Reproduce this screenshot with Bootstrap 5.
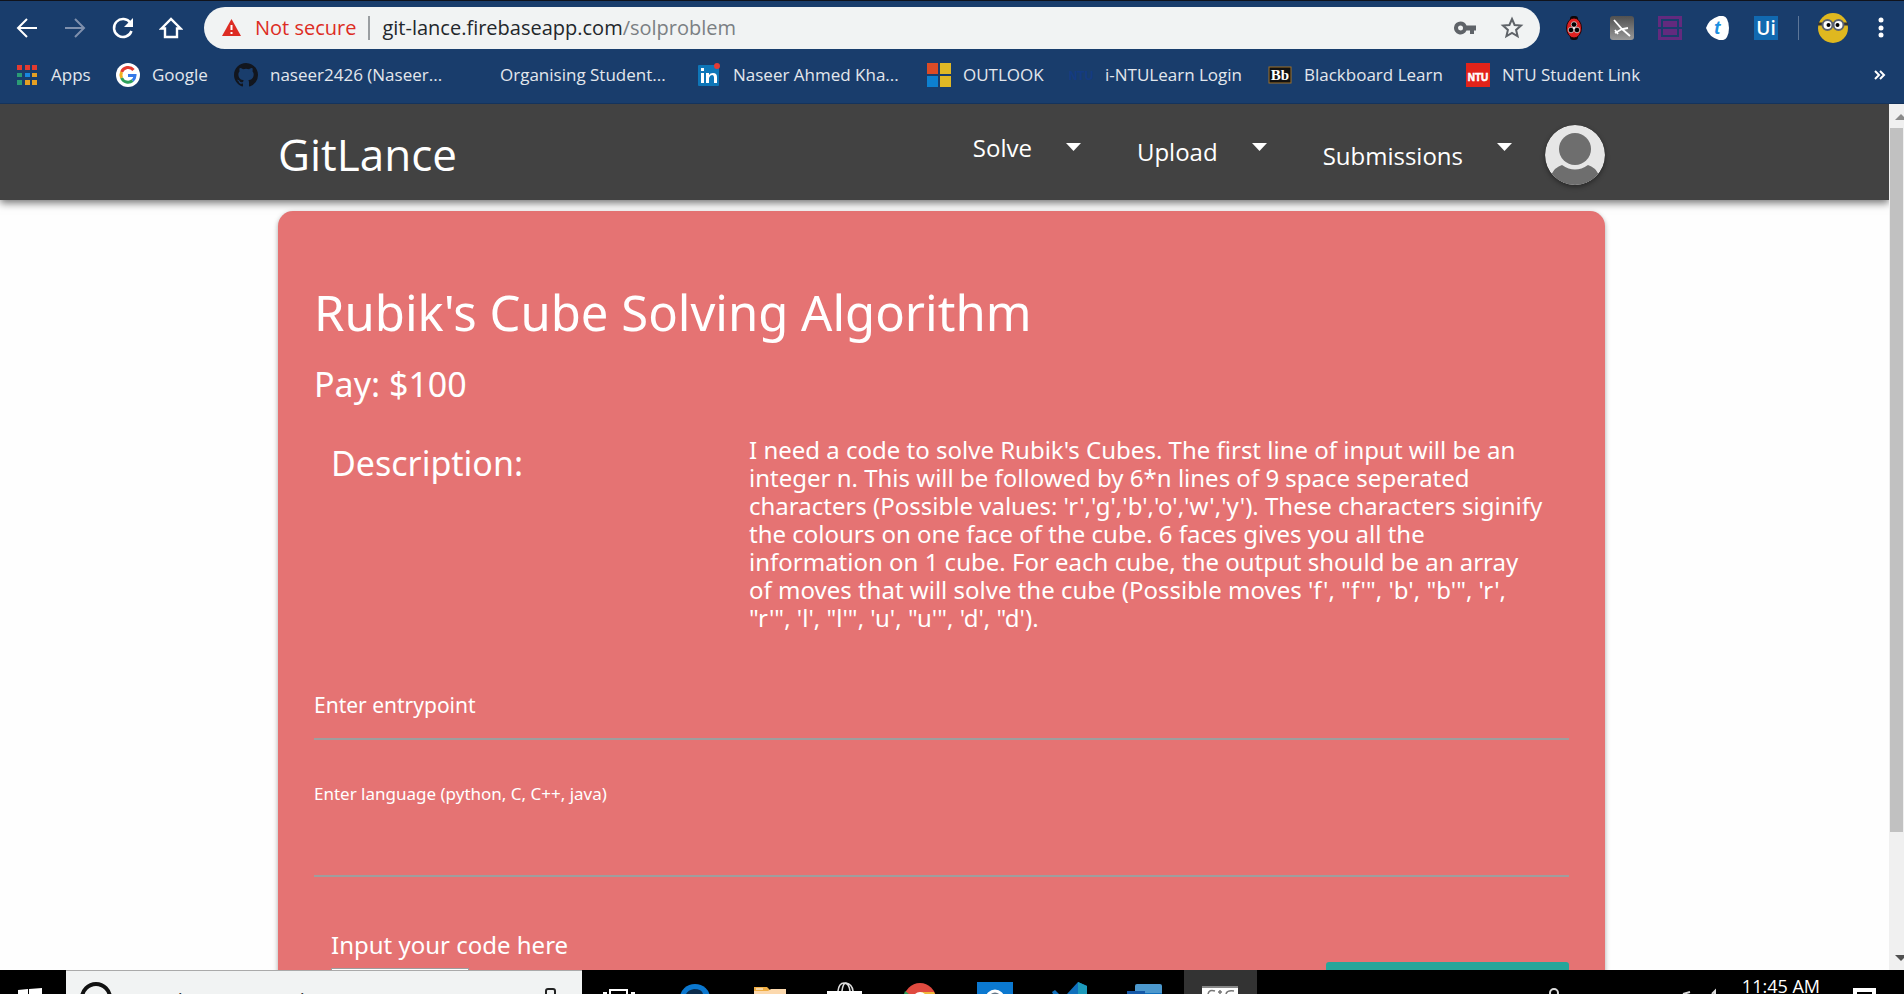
<!DOCTYPE html>
<html lang="en">
<head>
<meta charset="utf-8">
<meta name="viewport" content="width=device-width, initial-scale=1">
<title>GitLance</title>
<link href="https://cdn.jsdelivr.net/npm/bootstrap@5.3.0/dist/css/bootstrap.min.css" rel="stylesheet">
<style>
  body { font-family: "Open Sans", "Noto Sans", sans-serif; background: #fefefe; height: 100vh; overflow: hidden; }
  a { text-decoration: none; }
  button { font-family: inherit; }
  svg { display: block; flex: none; }

  /* browser chrome */
  .chrome-bar { background: #193d6c; border-top: 1px solid #10131c; border-bottom: 1px solid #14335c; height: 104px; padding-top: 6px; }
  .tool-row { height: 42px; padding-left: 15px; padding-right: 11px; }
  .tool-btn { width: 24px; height: 24px; padding: 0; border: 0; background: none; margin-right: 24px; }
  .omnibox { background: #f1f3f3; border-radius: 21px; height: 42px; padding: 0 16px 0 18px; margin-left: -3px; font-size: 20px; line-height: 28px; }
  .omnibox .warn { color: #dd2c23; margin-left: 14px; }
  .omnibox .rule { width: 2px; height: 24px; background: #9a9ea1; margin: 0 12px; }
  .url-host { color: #23272b; }
  .url-path { color: #7b7f83; }
  .ext-group { margin: 0 20px 0 22px; }
  .ext-btn { width: 24px; height: 24px; padding: 0; border: 0; background: none; }
  .profile-btn { padding: 0; border: 0; background: none; margin: 0 20px 0 17px; }
  .marks-row { display: grid; grid-template-columns: 101px 118px 230px 233px 230px 142px 199px 198px 1fr auto; padding: 0 18px 0 15px; margin-top: 12px; height: 28px; align-items: center; }
  .marks-row a { color: #e3e7ec; font-size: 17px; line-height: 24px; white-space: nowrap; display: flex; align-items: center; gap: 12px; }

  /* page */
  .viewport-row { min-height: 0; }
  .site-nav { background: #424242; height: 96px; box-shadow: 0 3px 8px rgba(0,0,0,.55); z-index: 2; padding: 0 284px 0 278px; }
  .site-logo { color: #fff; font-size: 44px; line-height: 60px; }
  .nav-entry { border: 0; background: none; color: #fff; font-size: 24px; line-height: 32px; padding: 0; text-align: left; display: flex; }
  .nav-group { gap: 56px; }
  .nav-group .caret { margin-top: 15px; margin-left: 34px; }
  .user-pic { border-radius: 50%; box-shadow: 0 2px 5px rgba(0,0,0,.4); margin: 6px 0 0 33px; }
  .page-body { padding: 11px 284px 0 278px; }
  .problem-card { font-family: "Noto Sans", "Open Sans", sans-serif; background: #e57373; color: #fff; border-radius: 15px; padding: 67px 36px 0; box-shadow: 0 2px 5px rgba(0,0,0,.35); height: 900px; }
  .problem-card h1 { font-size: 49px; line-height: 68px; margin: 0; font-weight: 400; }
  .problem-card h2 { font-size: 34px; line-height: 48px; margin: 0; font-weight: 400; }
  .problem-card .pay-line { padding-top: 14px; line-height: 48px; }
  .desc-row { padding: 28px 17px 0; display: grid; grid-template-columns: 418px 1fr; }
  .desc-text { font-size: 24px; line-height: 28px; margin: 0; white-space: nowrap; }
  .desc-row h2 { padding-top: 3px; }
  .field-entry { border: 0; border-bottom: 2px solid #9e9e9e; background: none; color: #fff; width: 100%; outline: 0; padding: 0; display: block; }
  .entry-point { font-size: 21px; height: 68px; margin-top: 40px; }
  .entry-point::placeholder { color: #fff; opacity: 1; }
  .lang-label { font-size: 17px; line-height: 24px; display: block; margin-top: 42px; }
  .entry-lang { height: 71px; font-size: 21px; }
  .code-row { padding: 52px 0 0 17px; }
  .code-row label { font-size: 24px; line-height: 32px; display: block; }
  .code-box { width: 138px; height: 60px; border: 1px solid #9e9e9e; background: #fff; display: block; margin-top: 7px; resize: none; }
  .send-btn { background: #26a69a; color: #fff; border: 0; border-radius: 3px; width: 243px; height: 54px; padding: 0; margin-top: 33px; }

  .scroll-track { width: 15px; background: #f0f0f0; display: flex; flex-direction: column; align-items: center; }
  .scroll-thumb { width: 13px; flex: 0 0 704px; background: #c1c1c1; }

  /* taskbar */
  .task-bar { height: 24px; background: #000; overflow: hidden; }
  .task-start { width: 66px; padding: 0; border: 0; background: none; flex: none; }
  .task-search { flex: 0 0 516px; background: #f1f3f3; border-top: 1px solid #aaa; padding-left: 13px; overflow: hidden; }
  .task-search input { border: 0; background: none; padding: 0; width: 400px; font-size: 20px; line-height: 28px; height: 28px; margin: 16px 0 0 15px; color: #333; outline: 0; }
  .task-search input::placeholder { color: #333; opacity: 1; }
  .task-btn { width: 75px; height: 24px; padding: 0; border: 0; background: none; flex: none; }
  .task-btn.running { background: #333; width: 73px; margin-left: 2px; }
  .clock { color: #fff; font-size: 18px; line-height: 24px; padding-top: 4px; }
</style>
</head>
<body class="d-flex flex-column">

<header class="chrome-bar flex-shrink-0">
  <div class="tool-row d-flex align-items-center">
    <button class="tool-btn" aria-label="Back"><svg width="24" height="24" fill="none" stroke="#fff" stroke-width="2"><path d="M22 12H3M12 3L3 12l9 9"/></svg></button>
    <button class="tool-btn" aria-label="Forward"><svg width="24" height="24" fill="none" stroke="#7f90ad" stroke-width="2"><path d="M2 12h19M12 3l9 9-9 9"/></svg></button>
    <button class="tool-btn" aria-label="Reload"><svg width="24" height="24" fill="none"><path d="M19.500 7A9 9 0 1 0 20.500 15" stroke="#fff" stroke-width="2.500"/><path d="M22 2v9h-9z" fill="#fff"/></svg></button>
    <button class="tool-btn" aria-label="Home"><svg width="24" height="24" fill="none" stroke="#fff" stroke-width="2.400"><path d="M2.500 12.500L12 3l9.500 9.500H18V21H6v-8.500z"/></svg></button>
    <div class="omnibox d-flex align-items-center flex-grow-1">
      <svg width="19" height="18" viewBox="0 0 19 18"><path d="M9.500 0L19 17H0z" fill="#dd2c23"/><path d="M8.500 6h2v5h-2zM8.500 13h2v2h-2z" fill="#fff"/></svg>
      <span class="warn">Not secure</span>
      <span class="rule"></span>
      <a href="#" class="flex-grow-1"><span class="url-host">git-lance.firebaseapp.com</span><span class="url-path">/solproblem</span></a>
      <svg width="22" height="14" viewBox="0 0 22 14" class="me-4"><path d="M6.500 .5a6.500 6.500 0 1 0 6 9H16V13h4V9.500h2v-5h-9.500a6.500 6.500 0 0 0-6-4zM6.500 4.500a2.500 2.500 0 1 1 0 5 2.500 2.500 0 0 1 0-5z" fill="#5f6368" fill-rule="evenodd"/></svg>
      <svg width="24" height="24" viewBox="0 0 24 24" fill="none" stroke="#5f6368" stroke-width="2"><path d="M12 3l2.600 6 6.400.600-4.900 4.300 1.500 6.400L12 17l-5.600 3.300 1.500-6.400L3 9.600 9.400 9z"/></svg>
    </div>
    <div class="ext-group d-flex align-items-center gap-4">
      <button class="ext-btn" aria-label="Ladybug"><svg class="mx-auto" width="18" height="24" viewBox="0 0 18 24"><rect x="5" y="0" width="8" height="24" rx="3" fill="#0c0708"/><ellipse cx="9" cy="12" rx="7.500" ry="10" fill="#df2020" stroke="#250608"/><g stroke="#eee" stroke-width=".7"><circle cx="9" cy="8.500" r="2.800"/><circle cx="6" cy="14" r="2.800"/><circle cx="12" cy="14" r="2.800"/></g><circle cx="9" cy="12" r="1" fill="#fff"/></svg></button>
      <button class="ext-btn" aria-label="Plane"><svg width="24" height="24"><defs><linearGradient id="pl" x2="0" y2="1"><stop stop-color="#505050"/><stop offset="1" stop-color="#999"/></linearGradient></defs><rect width="24" height="24" rx="3" fill="url(#pl)"/><path d="M4 4l8 9 8 7M18 12l-6 1-7 4M5 14l3 4" stroke="#fff" stroke-width="1.800" fill="none"/></svg></button>
      <button class="ext-btn" aria-label="Frames"><svg width="24" height="24"><path d="M0 0h24v11h-3V3H3v8H0zM0 13h3v8h18v-8h3v11H0zM5 5h14v6H5zM5 13h14v6H5z" fill="#632a7e"/></svg></button>
      <button class="ext-btn" aria-label="Tab"><svg width="24" height="24"><path d="M0 12Q3 3 13 0q6-1 8 3 2 4 2 9t-2 9q-2 4-8 3Q3 21 0 12z" fill="#fff"/><text x="8" y="18" font-family="Liberation Sans" font-size="19" font-weight="700" font-style="italic" fill="#1c8fe0">t</text></svg></button>
      <button class="ext-btn" aria-label="UiPath"><svg width="24" height="24"><rect width="24" height="24" fill="#1169b0"/><text x="12" y="19" text-anchor="middle" font-size="19" font-weight="600" fill="#fff">Ui</text></svg></button>
    </div>
    <svg width="2" height="24"><path d="M0 0h1v24H0z" fill="#5d7698"/></svg>
    <button class="profile-btn" aria-label="Profile"><svg width="32" height="32"><circle cx="16" cy="16" r="15" fill="#dfb81f"/><path d="M1 12h30" stroke="#333" stroke-width="3"/><circle cx="10.500" cy="13" r="5" fill="#fff" stroke="#5c6270" stroke-width="2"/><circle cx="21.500" cy="13" r="5" fill="#fff" stroke="#5c6270" stroke-width="2"/><circle cx="11.500" cy="13" r="2"/><circle cx="20.500" cy="13" r="2"/></svg></button>
    <button class="ext-btn" aria-label="Menu"><svg width="24" height="24" fill="#fff"><circle cx="12" cy="4" r="2.500"/><circle cx="12" cy="12" r="2.500"/><circle cx="12" cy="19" r="2.500"/></svg></button>
  </div>
  <nav class="marks-row" aria-label="Bookmarks">
    <a href="#"><svg width="24" height="24"><path d="M2 2h5v5H2zM10 2h5v5h-5zM17 2h5v5h-5z" fill="#e33b30"/><path d="M2 10h5v4H2zM2 17h5v5H2z" fill="#2b9c75"/><path d="M10 10h5v4h-5z" fill="#1787e0"/><path d="M17 10h5v4h-5zM10 17h5v5h-5zM17 17h5v5h-5z" fill="#e5a024"/></svg>Apps</a>
    <a href="#"><svg width="24" height="24" fill="none" stroke-width="3"><circle cx="12" cy="12" r="12" fill="#fff"/><path d="M17.500 7A7 7 0 0 0 5.600 9" stroke="#e33b30"/><path d="M5.600 9a7 7 0 0 0 0 6" stroke="#f0b020"/><path d="M5.600 15a7 7 0 0 0 11 2.500" stroke="#2da05a"/><path d="M16.600 17.500A7 7 0 0 0 19 12.500h-7" stroke="#3579e8"/></svg>Google</a>
    <a href="#"><svg width="24" height="24" viewBox="0 0 16 16"><path fill="#12161e" d="M8 0C3.580 0 0 3.580 0 8c0 3.540 2.290 6.530 5.470 7.590.4.070.55-.17.55-.38 0-.19-.01-.82-.01-1.490-2.010.37-2.530-.49-2.690-.94-.09-.23-.48-.94-.82-1.130-.28-.15-.68-.52-.01-.53.63-.01 1.080.58 1.230.82.72 1.210 1.870.87 2.330.66.070-.52.28-.87.51-1.070-1.780-.2-3.640-.89-3.640-3.950 0-.87.31-1.590.82-2.150-.08-.2-.36-1.020.08-2.120 0 0 .67-.21 2.200.82a7.600 7.600 0 0 1 4 0c1.530-1.040 2.200-.82 2.200-.82.44 1.100.16 1.920.08 2.120.51.56.82 1.270.82 2.150 0 3.070-1.870 3.750-3.650 3.950.29.25.54.73.54 1.480 0 1.070-.01 1.930-.01 2.200 0 .21.15.46.55.38A8 8 0 0 0 16 8c0-4.420-3.580-8-8-8z"/></svg>naseer2426 (Naseer...</a>
    <a href="#"><svg width="24" height="24"></svg>Organising Student...</a>
    <a href="#"><svg width="24" height="24"><rect x="1" y="2" width="21" height="21" rx="1" fill="#0e76b8"/><path d="M4 10h3v10H4zM4 5h3v3H4zM9 10h3v2q1-2 4-2 4 0 4 4v6h-3v-5q0-3-2-3t-3 3v5H9z" fill="#fff"/><circle cx="20" cy="3" r="3" fill="#e53b35"/></svg>Naseer Ahmed Kha...</a>
    <a href="#"><svg width="24" height="24"><path d="M0 0h11v11H0z" fill="#dc4b25"/><path d="M13 0h11v11H13zM13 13h11v11H13z" fill="#e0b825"/><path d="M0 13h11v11H0z" fill="#0d80d0"/></svg>OUTLOOK</a>
    <a href="#"><svg width="24" height="24"><text x="12" y="17" text-anchor="middle" font-family="Liberation Sans" font-size="12" font-weight="700" fill="#143b82">NTU</text></svg>i-NTULearn Login</a>
    <a href="#"><svg width="24" height="18"><rect x="1" y="1" width="22" height="16" fill="#111" stroke="#a0722a"/><text x="12" y="14" text-anchor="middle" font-family="Liberation Serif" font-size="15" font-weight="700" fill="#fff">Bb</text></svg>Blackboard Learn</a>
    <a href="#"><svg width="24" height="24"><rect width="24" height="24" fill="#e2231a"/><text x="12" y="18" text-anchor="middle" font-family="Liberation Sans" font-size="10" font-weight="700" fill="#fff" stroke="#fff" stroke-width=".5">NTU</text></svg>NTU Student Link</a>
    <a href="#" aria-label="More bookmarks"><svg width="12" height="12" fill="none" stroke="#fff" stroke-width="2"><path d="M1 2l4 4-4 4M6 2l4 4-4 4"/></svg></a>
  </nav>
</header>

<div class="viewport-row d-flex flex-grow-1 overflow-hidden">
  <div class="flex-grow-1 d-flex flex-column overflow-hidden">
    <nav class="site-nav d-flex justify-content-between position-relative flex-shrink-0">
      <a href="#" class="site-logo align-self-center pt-1">GitLance</a>
      <div class="d-flex align-items-start">
        <div class="nav-group d-flex align-items-start pt-4">
          <button class="nav-entry"><span class="pt-1">Solve</span><svg class="caret" width="15" height="8"><path d="M0 0h15L7.500 8z" fill="#fff"/></svg></button>
          <button class="nav-entry"><span class="pt-2">Upload</span><svg class="caret" width="15" height="8"><path d="M0 0h15L7.500 8z" fill="#fff"/></svg></button>
          <button class="nav-entry"><span class="pt-2 mt-1">Submissions</span><svg class="caret" width="15" height="8"><path d="M0 0h15L7.500 8z" fill="#fff"/></svg></button>
        </div>
        <svg class="user-pic align-self-center" width="60" height="60" viewBox="0 0 60 60"><clipPath id="face"><circle cx="30" cy="30" r="30"/></clipPath><g clip-path="url(#face)"><path d="M0 0h60v60H0z" fill="#e6e6e6"/><path d="M6 50q4-8 11-10 13 9 26 0 7 2 11 10v10H6z" fill="#6e6e6e"/><circle cx="30" cy="24" r="16" fill="#6e6e6e"/></g></svg>
      </div>
    </nav>
    <main class="page-body">
      <form class="problem-card">
        <h1>Rubik's Cube Solving Algorithm</h1>
        <h2 class="pay-line">Pay: $100</h2>
        <div class="desc-row">
          <h2>Description:</h2>
          <p class="desc-text">I need a code to solve Rubik's Cubes. The first line of input will be an<br>integer n. This will be followed by 6*n lines of 9 space seperated<br>characters (Possible values: 'r','g','b','o','w','y'). These characters siginify<br>the colours on one face of the cube. 6 faces gives you all the<br>information on 1 cube. For each cube, the output should be an array<br>of moves that will solve the cube (Possible moves 'f', "f'", 'b', "b'", 'r',<br>"r'", 'l', "l'", 'u', "u'", 'd', "d').</p>
        </div>
        <input class="field-entry entry-point" type="text" placeholder="Enter entrypoint" aria-label="Enter entrypoint">
        <label class="lang-label" for="lang">Enter language (python, C, C++, java)</label>
        <input class="field-entry entry-lang" id="lang" type="text">
        <div class="code-row d-flex justify-content-between align-items-start">
          <div><label for="code">Input your code here</label><textarea class="code-box" id="code"></textarea></div>
          <button type="button" class="send-btn" aria-label="Submit"></button>
        </div>
      </form>
    </main>
  </div>
  <div class="scroll-track flex-shrink-0" aria-hidden="true">
    <svg width="15" height="24"><path d="M6 16l6-6 6 6z" fill="#8a8a8a"/></svg>
    <div class="scroll-thumb"></div>
    <svg width="15" height="24" class="mt-auto"><path d="M6 9h12l-6 6z" fill="#505050"/></svg>
  </div>
</div>

<footer class="task-bar d-flex flex-shrink-0">
  <button class="task-start" aria-label="Start"><svg width="66" height="24"><path d="M18 20l10-1v5H18zM29 19l13-1v6H29z" fill="#fff"/></svg></button>
  <div class="task-search d-flex align-items-start">
    <svg width="34" height="23"><circle cx="17" cy="27" r="14" fill="none" stroke="#111" stroke-width="4"/></svg>
    <input type="text" placeholder="Type here to search" aria-label="Type here to search">
    <svg width="14" height="23" class="ms-auto me-4"><rect x="2" y="18" width="9" height="16" rx="2" fill="none" stroke="#222" stroke-width="2"/></svg>
  </div>
  <button class="task-btn" aria-label="Task view"><svg width="75" height="24" fill="none" stroke="#fff" stroke-width="2"><path d="M28 24v-4h17v4M21 23h4M49 23h4"/></svg></button>
  <button class="task-btn" aria-label="Edge"><svg width="75" height="24"><ellipse cx="38" cy="28" rx="15" ry="14" fill="#0b78d0"/><path d="M29 24q2-4 8-5 8 0 9 5z" fill="#0c2c4c"/></svg></button>
  <button class="task-btn" aria-label="Files"><svg width="75" height="24"><path d="M22 17h13l3 3v4H22z" fill="#f0ae45"/><path d="M22 21h14l3-2h15v5H22z" fill="#fcd9ae"/><path d="M24 19h7" stroke="#fff"/></svg></button>
  <button class="task-btn" aria-label="Store"><svg width="75" height="24"><path d="M31 21q1-8 6-8t6 8M35 21q1-8 4-8 6 1 7 8" fill="none" stroke="#ddd" stroke-width="1.600"/><path d="M20 21h35v3H20z" fill="#fff"/></svg></button>
  <button class="task-btn" aria-label="Chrome"><svg width="75" height="24"><circle cx="38" cy="29" r="16" fill="#e04a3f"/><path d="M22 24l1-3 4 3z" fill="#2f9e56"/><path d="M38 22h14l1 2H38z" fill="#f0b83a"/><circle cx="38" cy="29" r="7" fill="#fff"/></svg></button>
  <button class="task-btn" aria-label="Photos"><svg width="75" height="24"><path d="M20 12h36v12H20z" fill="#0b78d0"/><circle cx="38" cy="29" r="8" fill="#677888" stroke="#fff" stroke-width="3"/></svg></button>
  <button class="task-btn" aria-label="Code"><svg width="75" height="24"><path d="M46 12l9 4v8H35z" fill="#1070bd"/><path d="M46 12l9 4v8h-9z" fill="#1d9abb"/><path d="M20 22l3-2 4 4h-6z" fill="#1070bd"/></svg></button>
  <button class="task-btn" aria-label="Outlook"><svg width="75" height="24"><rect x="28" y="14" width="27" height="12" rx="2" fill="#4c98cd"/><path d="M20 21h18v3H20z" fill="#1559a8"/><path d="M38 23h17v1H38z" fill="#1070bd"/></svg></button>
  <button class="task-btn running" aria-label="Screen to Gif"><svg width="73" height="24"><path d="M18 16h36v8H18z" fill="#fff"/><path d="M18 16h36v2H18z" fill="#888"/><path d="M31 21q-6-2-7 3M36 20v4M34 22h4M50 21q-7-1-8 3" fill="none" stroke="#777" stroke-width="1.500"/></svg></button>
  <div class="d-flex flex-grow-1 justify-content-end align-items-start">
    <svg width="198" height="24" fill="none" stroke="#ddd" stroke-width="2"><circle cx="10" cy="23" r="4"/><path d="M139 24l7-2M168 24l3-3v3"/></svg>
    <time class="clock">11:45 AM</time>
    <svg width="84" height="24"><path d="M35 20h19v6H35z" fill="none" stroke="#fff" stroke-width="4"/></svg>
  </div>
</footer>
<script src="https://cdn.jsdelivr.net/npm/bootstrap@5.3.0/dist/js/bootstrap.bundle.min.js"></script>
</body>
</html>
